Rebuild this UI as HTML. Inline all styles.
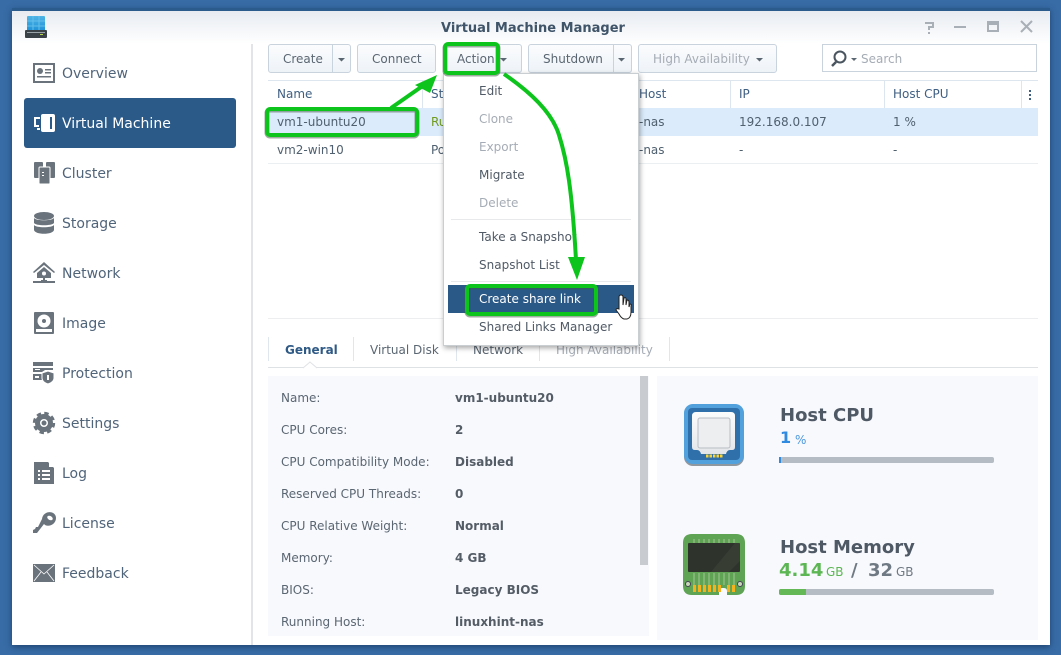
<!DOCTYPE html>
<html><head><meta charset="utf-8"><style>
html,body{margin:0;padding:0;width:1061px;height:655px;overflow:hidden;background:#386ca6;font-family:"DejaVu Sans",sans-serif;color:#50606f}
.a{position:absolute}
.t{position:absolute;white-space:nowrap;line-height:20px;font-size:12px;margin-top:1px}
.s{font-size:14px;color:#50647a;left:62px}
.btn{position:absolute;top:44px;height:27px;border:1px solid #c8d3de;border-radius:3px;background:linear-gradient(#fbfcfd,#eef3f8);box-sizing:content-box}
.h{color:#3f5f82}
.m{color:#505a66;left:479px}
.d{color:#a5acb5}
.l{left:281px;color:#5a6672}
.v{left:455px;font-weight:bold;color:#545c66}
svg{position:absolute;overflow:visible}
</style></head><body>
<div class="a" style="left:0;top:0;width:1061px;height:655px;background:#386ca6"></div>
<div class="a" style="left:12px;top:8px;width:1038px;height:637px;background:#2b5a8c;box-shadow:0 2px 6px rgba(20,50,90,.7)"></div>
<div class="a" style="left:12px;top:11px;width:1038px;height:634px;background:#fff"></div>
<div class="a" style="left:12px;top:11px;width:1038px;height:33px;background:linear-gradient(#e7ebf1,#fff)"></div>
<div class="a" style="left:251px;top:44px;width:2px;height:601px;background:#e2e4e7"></div>

<svg style="left:25px;top:15px" width="23" height="24" viewBox="0 0 23 24"><defs><linearGradient id="lg" x1="0" y1="0" x2="0" y2="1"><stop offset="0" stop-color="#4fb4e6"/><stop offset="1" stop-color="#1c8fd6"/></linearGradient></defs><rect x="2" y="1" width="18" height="16" rx="1" fill="url(#lg)"/><path d="M2 6h18M2 11h18M8 1v16M14 1v16" stroke="#62bfea" stroke-width="1"/><rect y="15" width="22" height="8" rx="1" fill="#3a4248"/><rect x="2" y="17" width="18" height="1" fill="#9aa3a8"/><rect x="15" y="19" width="3" height="1" fill="#b7d64a"/></svg>
<div class="t" style="left:441px;top:18px;font-size:13px;font-weight:bold;color:#3f5469">Virtual Machine Manager</div>
<svg style="left:920px;top:18px" width="115" height="18" viewBox="0 0 115 18" fill="none" stroke="#a9afb6" stroke-width="2"><path d="M5 5h8v4h-4v3M9 14v2"/><path d="M34 9h12"/><rect x="68" y="4" width="10" height="9" stroke-width="2"/><rect x="68" y="4" width="10" height="2" fill="#a9afb6"/><path d="M101 3l11 11M112 3l-11 11"/></svg>

<!-- sidebar -->
<div class="a" style="left:24px;top:98px;width:212px;height:50px;background:#2b5a89;border-radius:3px"></div>
<div class="t s" style="top:63px">Overview</div>
<div class="t s" style="top:113px;color:#fff">Virtual Machine</div>
<div class="t s" style="top:163px">Cluster</div>
<div class="t s" style="top:213px">Storage</div>
<div class="t s" style="top:263px">Network</div>
<div class="t s" style="top:313px">Image</div>
<div class="t s" style="top:363px">Protection</div>
<div class="t s" style="top:413px">Settings</div>
<div class="t s" style="top:463px">Log</div>
<div class="t s" style="top:513px">License</div>
<div class="t s" style="top:563px">Feedback</div>

<svg style="left:33px;top:63px" width="22" height="20" viewBox="0 0 22 20"><rect width="22" height="20" fill="#6a737c"/><rect x="2" y="2" width="18" height="16" fill="#fff"/><circle cx="7" cy="8" r="3" fill="#6a737c"/><path d="M12 6h6v1.500h-6zM12 9h6v1.500h-6zM4 13h14v1.500H4z" fill="#6a737c"/></svg>
<svg style="left:33px;top:114px" width="22" height="18" viewBox="0 0 22 18"><path d="M7 3H1v10h5v-2H3V5h4zM4 14h3v2H4z" fill="#fff"/><rect x="8" y="0" width="14" height="18" rx="2" fill="#fff"/><path d="M11 3h6v12h2V3z" fill="#2b5a89"/></svg>
<svg style="left:34px;top:162px" width="21" height="22" viewBox="0 0 21 22" fill="#6a737c"><rect x="0" y="0" width="9" height="16" rx="1"/><rect x="12" y="0" width="9" height="16" rx="1"/><rect x="5" y="5" width="11" height="17" rx="1" stroke="#fff"/><path d="M8 10h2v1H8zM8 13h2v1H8z" fill="#fff"/></svg>
<svg style="left:34px;top:212px" width="20" height="22" viewBox="0 0 20 22" fill="#6a737c"><ellipse cx="10" cy="4" rx="10" ry="4"/><path d="M0 6c2 3 18 3 20 0v5c-2 3-18 3-20 0zM0 13c2 3 18 3 20 0v5c-1 5-19 5-20 0z"/></svg>
<svg style="left:33px;top:262px" width="22" height="22" viewBox="0 0 22 22" fill="#6a737c"><path d="M11 0L0 10l1 1L11 3l10 8 1-1zM4 11l7-6 7 6v5H4z"/><circle cx="11" cy="11.500" r="2" fill="#fff"/><rect x="10" y="16" width="2" height="4"/><path d="M0 19h8v2H0zM14 19h8v2h-8zM8 18h6v3H8z"/></svg>
<svg style="left:34px;top:312px" width="20" height="22" viewBox="0 0 20 22"><rect width="20" height="22" rx="1" fill="#6a737c"/><circle cx="10" cy="9" r="6.500" fill="#fff"/><circle cx="10" cy="9" r="2" fill="#6a737c"/><rect x="2" y="17" width="16" height="3" fill="#fff"/></svg>
<svg style="left:33px;top:362px" width="22" height="22" viewBox="0 0 22 22" fill="#6a737c"><path d="M0 0h20v4H0zM0 6h20v2H12l-3 2H0zM0 12h9v6H0z"/><path d="M15 9l6 2v5c0 3-3 5-6 6-3-1-6-3-6-6v-5z" stroke="#fff"/><path d="M14 13h2v5h-2z" fill="#fff"/><path d="M2 7h5v1H2zM2 14h4v2H2z" fill="#fff"/></svg>
<svg style="left:33px;top:412px" width="22" height="22" viewBox="0 0 22 22" fill="none"><circle cx="11" cy="11" r="6.500" stroke="#6a737c" stroke-width="5"/><circle cx="11" cy="11" r="10" stroke="#6a737c" stroke-width="2.400" stroke-dasharray="4.500 3.350"/><circle cx="11" cy="11" r="2.500" fill="#6a737c"/></svg>
<svg style="left:34px;top:462px" width="20" height="22" viewBox="0 0 20 22" fill="#6a737c"><path d="M0 0h14l6 6v16H0z"/><path d="M15 0l5 5h-5z" fill="#fff"/><path d="M4 8h2v2H4zM8 8h8v2H8zM4 12h2v2H4zM8 12h8v2H8zM4 16h2v2H4zM8 16h8v2H8z" fill="#fff"/></svg>
<svg style="left:33px;top:512px" width="23" height="22" viewBox="0 0 23 22" fill="#6a737c"><path d="M9 7c1-9 14-9 14-1 0 7-9 10-12 6L4 21H0v-3l2-1 1-2h2l1-2z"/><ellipse cx="17" cy="6" rx="3" ry="2" fill="#fff" transform="rotate(30 17 6)"/></svg>
<svg style="left:33px;top:564px" width="22" height="18" viewBox="0 0 22 18"><rect width="22" height="18" fill="#6a737c"/><path d="M1 1l10 9 10-9M1 17l7-9M21 17l-7-9" stroke="#fff" fill="none" stroke-width=".8"/></svg>

<!-- toolbar -->
<div class="btn" style="left:268px;width:81px"></div><div class="a" style="left:332px;top:45px;width:1px;height:27px;background:#c8d3de"></div>
<div class="btn" style="left:357px;width:77px"></div>
<div class="btn" style="left:444px;width:76px"></div>
<div class="btn" style="left:528px;width:102px"></div><div class="a" style="left:613px;top:45px;width:1px;height:27px;background:#c8d3de"></div>
<div class="btn" style="left:638px;width:137px"></div>
<div class="a" style="left:822px;top:44px;width:213px;height:26px;border:1px solid #c8d3de;background:#fff"></div>
<div class="t" style="left:283px;top:48px;color:#5a6672">Create</div>
<div class="t" style="left:372px;top:48px;color:#5a6672">Connect</div>
<div class="t" style="left:457px;top:48px;color:#5a6672">Action</div>
<div class="t" style="left:543px;top:48px;color:#5a6672">Shutdown</div>
<div class="t" style="left:653px;top:48px;color:#a5acb5">High Availability</div>
<div class="t" style="left:861px;top:48px;color:#a5acb5">Search</div>
<svg style="left:0;top:0" width="1061" height="100"><path d="M338 58h7l-3.500 3.500zM500 58h7l-3.500 3.500zM618 58h7l-3.500 3.500zM756 58h7l-3.500 3.500z" fill="#5a6672"/><path d="M851 58h6l-3 3z" fill="#5a6672"/><circle cx="840" cy="57" r="5.500" fill="none" stroke="#4a5560" stroke-width="2"/><path d="M836 62l-4 4" stroke="#4a5560" stroke-width="2.500"/></svg>

<!-- table -->
<div class="a" style="left:268px;top:80px;width:770px;height:1px;background:#dde6ef"></div>
<div class="a" style="left:268px;top:108px;width:770px;height:28px;background:#dcebfb"></div>
<div class="a" style="left:268px;top:163px;width:770px;height:1px;background:#eceff2"></div>
<div class="a" style="left:422px;top:81px;width:1px;height:27px;background:#dde6ef"></div>
<div class="a" style="left:730px;top:81px;width:1px;height:27px;background:#dde6ef"></div>
<div class="a" style="left:884px;top:81px;width:1px;height:27px;background:#dde6ef"></div>
<div class="a" style="left:1021px;top:81px;width:1px;height:27px;background:#dde6ef"></div>
<div class="a" style="left:1029px;top:90px;width:2px;height:2px;background:#3f5f82;box-shadow:0 4px #3f5f82,0 8px #3f5f82"></div>
<div class="t h" style="left:277px;top:83px">Name</div>
<div class="t h" style="left:431px;top:83px">Status</div>
<div class="t h" style="left:639px;top:83px">Host</div>
<div class="t h" style="left:739px;top:83px">IP</div>
<div class="t h" style="left:893px;top:83px">Host CPU</div>
<div class="t" style="left:277px;top:111px">vm1-ubuntu20</div>
<div class="t" style="left:431px;top:111px;color:#6f9a1e">Running</div>
<div class="t" style="left:639px;top:111px">-nas</div>
<div class="t" style="left:739px;top:111px">192.168.0.107</div>
<div class="t" style="left:893px;top:111px">1 %</div>
<div class="t" style="left:277px;top:139px">vm2-win10</div>
<div class="t" style="left:431px;top:139px">Powered off</div>
<div class="t" style="left:639px;top:139px">-nas</div>
<div class="t" style="left:739px;top:139px">-</div>
<div class="t" style="left:893px;top:139px">-</div>

<!-- tabs -->
<div class="a" style="left:268px;top:367px;width:770px;height:1px;background:#dfe2e5"></div>
<div class="a" style="left:268px;top:318px;width:770px;height:1px;background:#eceef0"></div>
<div class="a" style="left:268px;top:337px;width:1px;height:24px;background:#dfe6ed"></div>
<div class="a" style="left:353px;top:337px;width:1px;height:24px;background:#dfe6ed"></div>
<div class="a" style="left:456px;top:337px;width:1px;height:24px;background:#dfe6ed"></div>
<div class="a" style="left:539px;top:337px;width:1px;height:24px;background:#dfe6ed"></div>
<div class="a" style="left:669px;top:337px;width:1px;height:24px;background:#dfe6ed"></div>
<div class="t" style="left:285px;top:339px;font-weight:bold;color:#2f5a86">General</div>
<div class="t" style="left:370px;top:339px;color:#5a6672">Virtual Disk</div>
<div class="t" style="left:473px;top:339px;color:#5a6672">Network</div>
<div class="t" style="left:556px;top:339px;color:#a5acb5">High Availability</div>
<svg style="left:303px;top:361px" width="16" height="8"><path d="M0 7l7-6 7 6" fill="#fff" stroke="#dfe2e5"/></svg>

<!-- panels -->
<div class="a" style="left:268px;top:376px;width:381px;height:260px;background:#f8f9fd"></div>
<div class="a" style="left:640px;top:376px;width:8px;height:189px;background:#c8ccd0"></div>
<div class="a" style="left:657px;top:376px;width:381px;height:264px;background:#f8f9fd"></div>
<div class="t l" style="top:387px">Name:</div><div class="t v" style="top:387px">vm1-ubuntu20</div>
<div class="t l" style="top:419px">CPU Cores:</div><div class="t v" style="top:419px">2</div>
<div class="t l" style="top:451px">CPU Compatibility Mode:</div><div class="t v" style="top:451px">Disabled</div>
<div class="t l" style="top:483px">Reserved CPU Threads:</div><div class="t v" style="top:483px">0</div>
<div class="t l" style="top:515px">CPU Relative Weight:</div><div class="t v" style="top:515px">Normal</div>
<div class="t l" style="top:547px">Memory:</div><div class="t v" style="top:547px">4 GB</div>
<div class="t l" style="top:579px">BIOS:</div><div class="t v" style="top:579px">Legacy BIOS</div>
<div class="t l" style="top:611px">Running Host:</div><div class="t v" style="top:611px">linuxhint-nas</div>

<!-- host cpu -->
<svg style="left:684px;top:404px" width="60" height="62" viewBox="0 0 60 62"><defs><linearGradient id="cp" x1="0" y1="0" x2="0" y2="1"><stop offset="0" stop-color="#fbfcfc"/><stop offset="1" stop-color="#e3e6e9"/></linearGradient></defs><rect y="1" width="60" height="61" rx="9" fill="#4a5560" opacity=".6"/><rect width="60" height="60" rx="9" fill="#52a0dc"/><rect x="4" y="4" width="52" height="52" rx="4" fill="#2f70aa"/><path d="M12 8h35q4 0 4 4v31q0 3-3 3h-2q-3 0-4 4H17q-1-4-4-4h-2q-3 0-3-3V12q0-4 4-4z" fill="url(#cp)"/><rect x="14" y="14" width="32" height="30" rx="2" fill="#eceef0" stroke="#b9bec3"/><path d="M22 50.500h2.500v3H22zM25.500 50.500h2.500v3h-2.500zM29 50.500h2.500v3H29zM32.500 50.500h2.500v3h-2.500zM36 50.500h2.500v3H36z" fill="#f5d33a"/></svg>
<div class="t" style="left:780px;top:405px;font-size:18px;font-weight:bold;color:#4e5965">Host CPU</div>
<div class="t" style="left:780px;top:427px;font-size:16px;font-weight:bold;color:#2f8ae0">1</div>
<div class="t" style="left:795px;top:429px;font-size:12px;color:#4a96e0">%</div>
<div class="a" style="left:779px;top:457px;width:215px;height:6px;background:#b5bcc3;border-radius:2px"></div>
<div class="a" style="left:779px;top:457px;width:2px;height:6px;background:#2f8ae0"></div>

<!-- host memory -->
<svg style="left:683px;top:534px" width="62" height="62" viewBox="0 0 62 62"><path d="M9 0h44q9 0 9 9v43q0 9-9 9H44v-4q0-3-3-3h-2q-3 0-3 3v4H9q-9 0-9-9V9q0-9 9-9z" fill="#5fa355"/><rect x="5" y="9" width="52" height="29" rx="1" fill="#2e332c"/><path d="M57 9v18l-11 11H28L52 9z" fill="#45493f" opacity=".45"/><path d="M11 5v4M16 5v4M21 5v4M26 5v4M31 5v4M36 5v4M41 5v4M46 5v4M51 5v4M11 39v12M16 39v12M21 39v12M26 39v12M31 39v12M36 39v12M41 39v12M46 39v12M51 39v12" stroke="#b6cca6" stroke-width=".8"/><path d="M10 51h3v7h-3zM15 51h3v7h-3zM20 51h3v7h-3zM25 51h3v7h-3zM30 51h3v7h-3zM35 51h3v7h-3zM44 51h3v7h-3zM49 51h3v7h-3z" fill="#f4b21f"/><circle cx="5" cy="50" r="2.500" fill="#c9d6b9" stroke="#445"/><circle cx="57" cy="50" r="2.500" fill="#c9d6b9" stroke="#445"/></svg>
<div class="t" style="left:780px;top:537px;font-size:18px;font-weight:bold;color:#4e5965">Host Memory</div>
<div class="t" style="left:779px;top:560px;font-size:18px;font-weight:bold;color:#5cb653">4.14</div>
<div class="t" style="left:826px;top:561px;font-size:12px;color:#5cb653">GB</div>
<div class="t" style="left:851px;top:560px;font-size:18px;font-weight:bold;color:#6f7983">/</div>
<div class="t" style="left:868px;top:560px;font-size:18px;font-weight:bold;color:#6f7983">32</div>
<div class="t" style="left:896px;top:561px;font-size:12px;color:#6f7983">GB</div>
<div class="a" style="left:779px;top:589px;width:215px;height:6px;background:#b5bcc3;border-radius:2px"></div>
<div class="a" style="left:779px;top:589px;width:27px;height:6px;background:#64b856;border-radius:2px 0 0 2px"></div>

<!-- menu -->
<div class="a" style="left:443px;top:73px;width:196px;height:273px;background:#fff;border:1px solid #c9ced3;box-sizing:border-box;box-shadow:1px 2px 5px rgba(0,0,0,.35)"></div>
<div class="a" style="left:451px;top:219px;width:180px;height:1px;background:#e8e9eb"></div>
<div class="a" style="left:451px;top:281px;width:180px;height:1px;background:#e8e9eb"></div>
<div class="a" style="left:448px;top:285px;width:186px;height:28px;background:#2b5987"></div>
<div class="t m" style="top:80px">Edit</div>
<div class="t m d" style="top:108px;color:#a5acb5">Clone</div>
<div class="t m d" style="top:136px;color:#a5acb5">Export</div>
<div class="t m" style="top:164px">Migrate</div>
<div class="t m d" style="top:192px;color:#a5acb5">Delete</div>
<div class="t m" style="top:226px">Take a Snapshot</div>
<div class="t m" style="top:254px">Snapshot List</div>
<div class="t m" style="top:288px;color:#fff">Create share link</div>
<div class="t m" style="top:316px">Shared Links Manager</div>

<!-- annotations -->
<svg style="left:0;top:0" width="1061" height="655" fill="none">
<g stroke="#3c5a3f" stroke-opacity=".5" stroke-width="5" transform="translate(0,1)">
<rect x="445" y="44" width="53" height="29" rx="3"/><rect x="267" y="109" width="150" height="26" rx="3"/><rect x="467" y="286" width="129" height="28" rx="3"/>
</g>
<g stroke="#0dc41c" stroke-width="4">
<rect x="445" y="44" width="53" height="29" rx="3"/><rect x="267" y="109" width="150" height="26" rx="3"/><rect x="467" y="286" width="129" height="28" rx="3"/>
<path d="M391 108L424 85"/>
<path d="M504 74C530 92 552 112 559 135C567 160 572 190 576 260"/>
</g>
<path d="M437 75L415 85L430 93z" fill="#0dc41c"/>
<path d="M577 280L568 257H585z" fill="#0dc41c"/>
<path transform="translate(-3,-2)" d="M622 308v-9q0-2 2-2t2 2v8l1-7q2-1 2 1v6l1-5q2 0 2 2v5l1-3q2 0 1 2v6q0 6-4 7h-3q-3-1-5-5l-3-4q0-2 3-1z" fill="#fff" stroke="#222" stroke-width="1"/>
</svg>
</body></html>
